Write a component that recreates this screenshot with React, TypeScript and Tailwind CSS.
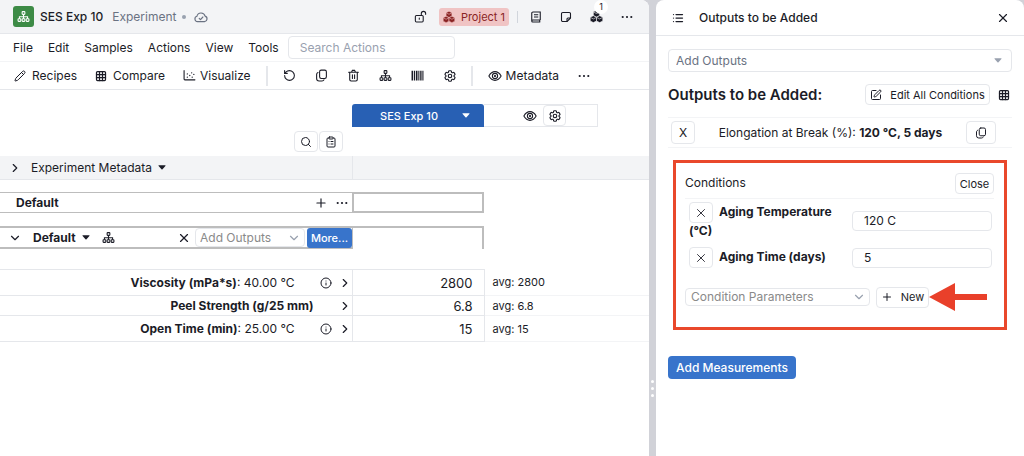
import type { ReactNode } from "react";
import clsx from "clsx";
import {
  ChevronDown,
  ChevronRight,
  ClipboardList,
  Grid3x3,
  Info,
  List,
  Pencil,
  Plus,
  RotateCcw,
  Search,
  SquarePen,
  X,
} from "lucide-react";
import { HiOutlineCog6Tooth } from "react-icons/hi2";

const menus = ["File", "Edit", "Samples", "Actions", "View", "Tools"];

const results = [
  { name: "Viscosity (mPa*s)", condition: "40.00 °C", value: "2800", height: "h-[26px]" },
  { name: "Peel Strength (g/25 mm)", condition: "", value: "6.8", height: "h-5" },
  { name: "Open Time (min)", condition: "25.00 °C", value: "15", height: "h-[26px]" },
];

type IconProps = { className?: string };

const SitemapIcon = ({ className }: IconProps) => (
  <svg viewBox="0 0 24 24" className={className} fill="none" stroke="currentColor" strokeWidth="2">
    <rect x="9.500" y="3" width="5" height="5" rx="1" />
    <path d="M12 8v8M4.500 16v-3.500h15V16" />
    <rect x="2" y="16" width="5" height="5" rx="1" />
    <rect x="9.500" y="16" width="5" height="5" rx="1" />
    <rect x="17" y="16" width="5" height="5" rx="1" />
  </svg>
);

const CopyIcon = ({ className }: IconProps) => (
  <svg viewBox="0 0 24 24" className={className} fill="none" stroke="currentColor" strokeWidth="2" strokeLinecap="round">
    <rect x="8.500" y="2" width="12.500" height="15.500" rx="3" />
    <path d="M5.500 6.500C4 7 3 8.200 3 10v7.500A4.500 4.500 0 0 0 7.500 22H13c1.800 0 3-.800 3.500-2" />
  </svg>
);

const LockIcon = ({ className }: IconProps) => (
  <svg viewBox="0 0 24 24" className={className} fill="none" stroke="currentColor" strokeWidth="2" strokeLinecap="round">
    <rect x="2.500" y="10" width="14.500" height="12" rx="2" />
    <path d="M13.500 10V6.500a4 4 0 0 1 8 0V8M9.750 15v2" />
  </svg>
);

const CloudIcon = ({ className }: IconProps) => (
  <svg viewBox="0 0 24 20" className={className} fill="none" stroke="currentColor" strokeWidth="2" strokeLinecap="round" strokeLinejoin="round">
    <path d="M6 18a4.700 4.700 0 0 1-1-9.200 7.200 7.200 0 0 1 14-.300A4.900 4.900 0 0 1 18 18z" />
    <path d="M9 12.500l2.200 2 4-4.500" />
  </svg>
);

const EyeIcon = ({ className }: IconProps) => (
  <svg viewBox="0 0 24 24" className={className} fill="none" stroke="currentColor" strokeWidth="1.800">
    <path d="M1.500 12C4 7.500 7.500 4.500 12 4.500S20 7.500 22.500 12C20 16.500 16.500 19.500 12 19.500S4 16.500 1.500 12z" />
    <circle cx="12" cy="12" r="4.500" />
    <circle cx="12" cy="12" r="1" fill="currentColor" />
  </svg>
);

const BookIcon = ({ className }: IconProps) => (
  <svg viewBox="0 0 24 24" className={className} fill="none" stroke="currentColor" strokeWidth="2.200">
    <path d="M20.500 18H5.500a2 2 0 0 0 0 4h15M3.500 20V4.500a2.500 2.500 0 0 1 2.500-2.500h14.500v16M19.500 18v4M8 7.500h8.500M8 12h8.500" />
  </svg>
);

const NoteIcon = ({ className }: IconProps) => (
  <svg viewBox="0 0 24 24" className={className} fill="none" stroke="currentColor" strokeWidth="2.200" strokeLinejoin="round">
    <path d="M5.500 3h13A2.500 2.500 0 0 1 21 5.500V14l-7 7H5.500A2.500 2.500 0 0 1 3 18.500v-13A2.500 2.500 0 0 1 5.500 3z" />
    <path d="M21 14h-5a2 2 0 0 0-2 2v5" />
  </svg>
);

const CubesIcon = ({ className, line }: IconProps & { line: string }) => (
  <svg viewBox="0 0 24 24" className={className} fill="currentColor" stroke={line} strokeWidth="1.100" strokeLinejoin="round">
    <path d="M12 .500l5.800 2.800v7L12 13.200 6.200 10.300v-7z" />
    <path d="M6.200 10.500l5.800 2.800v7l-5.800 3-5.800-3v-7z" />
    <path d="M17.800 10.500l5.800 2.800v7l-5.800 3-5.800-3v-7z" />
    <path d="M6.500 3.800L12 6.500l5.500-2.700M1 13.800l5.200 2.700 5.300-2.700M12.500 13.800l5.300 2.700 5.200-2.700" fill="none" />
  </svg>
);

const TrashIcon = ({ className }: IconProps) => (
  <svg viewBox="0 0 24 24" className={className} fill="none" stroke="currentColor" strokeWidth="2" strokeLinecap="round">
    <path d="M3 6h18M8.500 5.500L10 2.500h4l1.500 3M5 6v13.500A2.500 2.500 0 0 0 7.500 22h9a2.500 2.500 0 0 0 2.500-2.500V6M10 10.500v7M14 10.500v7" />
  </svg>
);

const BarcodeIcon = ({ className }: IconProps) => (
  <svg viewBox="0 0 24 24" className={className} fill="currentColor">
    <path d="M1 3h3v18H1zM5.500 3h2v18h-2zM9 3h3v18H9zM13.500 3h2v18h-2zM17 3h2.500v18H17zM21 3h2v18h-2z" />
  </svg>
);

const ScatterIcon = ({ className }: IconProps) => (
  <svg viewBox="0 0 24 24" className={className} fill="none" stroke="currentColor" strokeWidth="2" strokeLinecap="round">
    <path d="M2 3v15.500A1.500 1.500 0 0 0 3.500 20H22" />
    <path d="M8 9h.010M8 15h.010M12.500 12h.010M16 7h.010M17 15h.010M20 10h.010" strokeWidth="2.400" />
  </svg>
);

const Dots = () => (
  <svg viewBox="0 0 12 4" className="h-1 w-3" fill="currentColor">
    <circle cx="1.700" cy="2" r="1.100" />
    <circle cx="6" cy="2" r="1.100" />
    <circle cx="10.300" cy="2" r="1.100" />
  </svg>
);

const Caret = ({ className }: IconProps) => (
  <svg viewBox="0 0 8 5" className={clsx("h-[5px] w-2", className)} fill="currentColor">
    <path d="M.800.300h6.400q.600 0 .200.600L4.500 4.300q-.500.500-1 0L.600.900Q.200.300.800.300z" />
  </svg>
);

const IconButton = ({ label, className, children }: { label: string; className?: string; children: ReactNode }) => (
  <button aria-label={label} className={clsx("flex shrink-0 items-center justify-center", className)}>
    {children}
  </button>
);

const Dropdown = ({ label, className, children }: { label: string; className: string; children: ReactNode }) => (
  <div className="relative flex min-w-0 flex-1 items-center">
    <select
      aria-label={label}
      className={clsx("w-full appearance-none rounded border border-gray-200 bg-white", className)}
    >
      <option>{label}</option>
    </select>
    {children}
  </div>
);

const TopBar = () => (
  <header className="flex h-[34px] items-center border-b border-gray-200 bg-gray-100 pr-4 pl-[13px]">
    <span className="flex size-[21px] items-center justify-center rounded-[3px] bg-[#3d8b46] text-white">
      <SitemapIcon className="size-[13px]" />
    </span>
    <h1 className="ml-1.5 font-medium">SES Exp 10</h1>
    <span className="ml-[9px] text-gray-500">Experiment</span>
    <span className="ml-1.5 size-1 rounded-full bg-gray-400" />
    <CloudIcon className="ml-2 h-3 w-3.5 text-gray-500" />
    <div className="ml-auto flex items-center">
      <IconButton label="Unlock">
        <LockIcon className="size-[13px]" />
      </IconButton>
      <button className="ml-3 flex h-[18px] items-center gap-1.5 rounded-[3px] bg-[#f0c4c4] px-1 text-[11px] text-[#8a2424]">
        <CubesIcon className="size-3" line="#f0c4c4" />
        Project 1
      </button>
      <span className="mr-3 ml-2 h-3 w-px bg-gray-300" />
      <div className="flex items-center gap-[18px]">
        <IconButton label="Notebook">
          <BookIcon className="size-3" />
        </IconButton>
        <IconButton label="Notes">
          <NoteIcon className="size-3" />
        </IconButton>
        <button aria-label="Projects" className="relative">
          <CubesIcon className="size-[13px]" line="#f3f4f6" />
          <span className="absolute -top-2.5 left-1 flex size-3.5 items-center justify-center rounded-full bg-white text-[9px] leading-3">
            1
          </span>
        </button>
        <IconButton label="More options">
          <Dots />
        </IconButton>
      </div>
    </div>
  </header>
);

const MenuBar = () => (
  <nav className="flex h-7 items-center gap-[15px] border-b border-gray-100 pl-[13px]">
    {menus.map((item) => (
      <button key={item}>{item}</button>
    ))}
    <input
      aria-label="Search Actions"
      placeholder="Search Actions"
      className="-ml-1.5 h-[23px] w-[167px] rounded border border-gray-200 px-[11px] placeholder:text-gray-400"
    />
  </nav>
);

const Toolbar = () => (
  <div className="flex h-7 items-center border-b border-gray-200 pl-3.5">
    <button className="flex items-center gap-1.5">
      <Pencil className="size-3" /> Recipes
    </button>
    <button className="ml-[18px] flex items-center gap-1.5">
      <Grid3x3 className="size-3" strokeWidth={2.5} /> Compare
    </button>
    <button className="ml-[18px] flex items-center gap-1">
      <ScatterIcon className="size-[13px]" /> Visualize
    </button>
    <span className="ml-[15px] h-5 w-0.5 bg-gray-200" />
    <div className="ml-[15px] flex items-center gap-[19px]">
      <IconButton label="Undo">
        <RotateCcw className="size-[13px]" />
      </IconButton>
      <IconButton label="Copy">
        <CopyIcon className="size-[13px]" />
      </IconButton>
      <IconButton label="Delete">
        <TrashIcon className="size-[13px]" />
      </IconButton>
      <IconButton label="Hierarchy">
        <SitemapIcon className="size-[13px]" />
      </IconButton>
      <IconButton label="Barcode">
        <BarcodeIcon className="size-[13px]" />
      </IconButton>
      <IconButton label="Settings">
        <HiOutlineCog6Tooth className="size-3.5" strokeWidth={2} />
      </IconButton>
    </div>
    <span className="ml-3.5 h-5 w-0.5 bg-gray-200" />
    <button className="ml-[15px] flex items-center gap-1">
      <EyeIcon className="size-3.5" /> Metadata
    </button>
    <IconButton label="More tools" className="ml-[19px]">
      <Dots />
    </IconButton>
  </div>
);

const SampleHeader = () => (
  <>
    <div className="mt-3.5 flex h-[23px] pl-[352px]">
      <button className="flex w-[132px] items-center justify-end rounded-t-[3px] bg-[#2860b4] pr-3.5 text-[11px] font-medium text-white">
        SES Exp 10
        <Caret className="ml-6" />
      </button>
      <div className="flex w-[114px] items-center justify-end gap-1.5 border border-l-0 border-gray-200 pr-[31px]">
        <IconButton label="Show sample">
          <EyeIcon className="size-3.5" />
        </IconButton>
        <IconButton label="Sample settings" className="h-[21px] w-[23px] rounded border border-gray-200">
          <HiOutlineCog6Tooth className="size-3.5" strokeWidth={2} />
        </IconButton>
      </div>
    </div>
    <div className="mt-1 flex gap-px pl-[294px]">
      <IconButton label="Search rows" className="h-[21px] w-6 rounded border border-gray-200">
        <Search className="size-3" />
      </IconButton>
      <IconButton label="Clipboard" className="h-[21px] w-6 rounded border border-gray-200">
        <ClipboardList className="size-3" />
      </IconButton>
    </div>
  </>
);

const ExperimentSections = () => (
  <>
    <div className="mt-1 flex h-6 border-b border-gray-200 bg-gray-100">
      <button className="flex w-[353px] items-center border-r border-gray-200 pl-2">
        <ChevronRight className="size-3.5" />
        <span className="mr-1.5 ml-[9px]">Experiment Metadata</span>
        <Caret />
      </button>
    </div>
    <div className="mt-3 flex h-[21px]">
      <div className="flex w-[353px] items-center border-y border-r border-[#bdbdbd] pr-1 pl-4">
        <h2 className="font-bold">Default</h2>
        <IconButton label="Add sample row" className="ml-auto">
          <Plus className="size-3.5" />
        </IconButton>
        <IconButton label="Row options" className="ml-2">
          <Dots />
        </IconButton>
      </div>
      <div className="w-[131px] border-2 border-l border-[#bdbdbd]" />
    </div>
    <div className="mt-[13px] flex h-[23px]">
      <div className="flex w-[353px] items-center border-y-2 border-r border-[#bdbdbd] pl-2">
        <ChevronDown className="size-3.5" />
        <button className="ml-[11px] flex items-center gap-1.5 font-bold">
          Default <Caret />
        </button>
        <IconButton label="Output hierarchy" className="ml-3">
          <SitemapIcon className="size-[13px]" />
        </IconButton>
        <IconButton label="Remove outputs" className="mr-1 ml-auto">
          <X className="size-3.5" />
        </IconButton>
        <div className="flex w-[110px]">
          <Dropdown label="Add Outputs" className="h-[19px] pl-1 text-[#8a8a8a]">
            <ChevronDown className="pointer-events-none absolute right-1 size-3.5 text-gray-400" />
          </Dropdown>
        </div>
        <button className="ml-0.5 h-5 w-[45px] rounded-[3px] bg-[#3874cb] text-[11px] font-medium text-white">
          More...
        </button>
      </div>
      <div className="w-[131px] border-t-2 border-r-2 border-[#bdbdbd]" />
    </div>
  </>
);

const ResultsTable = () => (
  <table className="mt-5 w-full table-fixed border-collapse">
    <colgroup>
      <col className="w-[352px]" />
      <col className="w-[132px]" />
      <col />
    </colgroup>
    <tbody>
      {results.map(({ name, condition, value, height }) => (
        <tr key={name} className={height}>
          <th scope="row" className="border-y border-r border-gray-200 p-0 font-normal">
            <div className="flex items-center justify-end">
              <span>
                <b>{name}</b>
                {condition && `: ${condition}`}
              </span>
              {condition ? <Info className="mr-1.5 ml-[25px] size-3" /> : <span className="w-6" />}
              <ChevronRight className="size-3.5" />
            </div>
          </th>
          <td className="border border-gray-200 py-0 pr-[11px] text-right text-[13px] leading-4">{value}</td>
          <td className="border-b border-gray-100 py-0 pl-2 text-[11px] leading-4">avg: {value}</td>
        </tr>
      ))}
    </tbody>
  </table>
);

const ConditionRow = ({ id, label, value }: { id: string; label: string; value: string }) => (
  <div className="flex items-center justify-between">
    <div className="w-[152px]">
      <button
        aria-label={`Remove ${label}`}
        className="mr-1.5 inline-flex h-[21px] w-6 items-center justify-center rounded border border-gray-200 align-middle"
      >
        <X className="size-3.5" strokeWidth={1.5} />
      </button>
      <label htmlFor={id} className="font-bold">
        {label}
      </label>
    </div>
    <input id={id} defaultValue={value} className="h-5 w-[140px] rounded border border-gray-200 px-[11px]" />
  </div>
);

const Conditions = () => (
  <section className="mx-[5px] mt-3 border-3 border-[#e9482b] pt-2.5 pr-2.5 pb-4 pl-[9px]">
    <div className="flex h-[26px] items-start justify-between border-b border-gray-100">
      <h3 className="pt-0.5">Conditions</h3>
      <button className="h-[21px] w-[39px] rounded border border-gray-200 text-[11px]">Close</button>
    </div>
    <div className="flex flex-col gap-2 pt-[3px] pr-0.5 pl-1">
      <ConditionRow id="aging-temperature" label="Aging Temperature (°C)" value="120 C" />
      <ConditionRow id="aging-time" label="Aging Time (days)" value="5" />
    </div>
    <div className="mt-[15px] flex items-center">
      <div className="flex w-[185px]">
        <Dropdown label="Condition Parameters" className="h-[18px] pl-[5px] text-[#8a8a8a]">
          <ChevronDown className="pointer-events-none absolute right-1 size-3.5 text-gray-400" />
        </Dropdown>
      </div>
      <button className="ml-1.5 flex h-[21px] w-[53px] items-center justify-center gap-2 rounded border border-gray-200 text-[11px]">
        <Plus className="size-3" /> New
      </button>
      <svg viewBox="0 0 58 28" className="h-7 w-[58px]" fill="#e9402a">
        <path d="M0 14L26 0v11h32v6H26v11z" />
      </svg>
    </div>
  </section>
);

const OutputsPanel = () => (
  <aside className="w-[368px] shrink-0 rounded-t-lg bg-white">
    <header className="flex h-9 items-center border-b border-gray-200 pr-3.5 pl-4">
      <List className="size-3" strokeWidth={2.5} />
      <h2 className="ml-[15px] font-medium">Outputs to be Added</h2>
      <IconButton label="Close panel" className="ml-auto">
        <X className="size-3.5" />
      </IconButton>
    </header>
    <div className="px-3 pt-[13px]">
      <Dropdown label="Add Outputs" className="h-[23px] pl-[7px] text-gray-500">
        <Caret className="pointer-events-none absolute right-2.5 text-gray-400" />
      </Dropdown>
      <div className="mt-3 flex items-center">
        <h2 className="text-[15px] font-semibold">Outputs to be Added:</h2>
        <button className="ml-auto flex h-[21px] w-[125px] items-center justify-center gap-2 rounded border border-gray-200 text-[11px]">
          <SquarePen className="size-3" /> Edit All Conditions
        </button>
        <IconButton label="Show as table" className="mr-0.5 ml-2">
          <Grid3x3 className="size-3" strokeWidth={2.5} />
        </IconButton>
      </div>
      <div className="mt-3 flex h-[31px] items-center border-y border-gray-100 pr-4 pl-[3px]">
        <IconButton label="Remove Elongation at Break" className="h-[23px] w-6 rounded border border-gray-200">
          X
        </IconButton>
        <p className="flex-1 text-center">
          Elongation at Break (%): <b>120 °C, 5 days</b>
        </p>
        <IconButton label="Duplicate output" className="h-[23px] w-[30px] rounded border border-gray-200">
          <CopyIcon className="size-3" />
        </IconButton>
      </div>
      <Conditions />
      <button className="mt-[26px] h-[23px] w-32 rounded bg-[#3874cb] font-medium text-white">Add Measurements</button>
    </div>
  </aside>
);

const App = () => (
  <div className="flex min-h-screen bg-[#d1d2d8] font-['Inter','Liberation_Sans',sans-serif] text-[12px] leading-4 text-[#1b1c27]">
    <main className="min-w-0 flex-1 overflow-hidden rounded-tr-lg bg-white">
      <TopBar />
      <MenuBar />
      <Toolbar />
      <SampleHeader />
      <ExperimentSections />
      <ResultsTable />
    </main>
    <div role="separator" className="flex w-[7px] shrink-0 flex-col items-center gap-1 pt-[380px]">
      <span className="size-[3px] rounded-full bg-white" />
      <span className="size-[3px] rounded-full bg-white" />
      <span className="size-[3px] rounded-full bg-white" />
    </div>
    <OutputsPanel />
  </div>
);

export default App;
